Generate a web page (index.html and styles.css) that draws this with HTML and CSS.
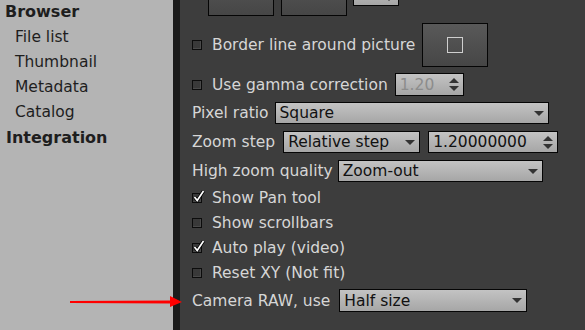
FILE: index.html
```html
<!DOCTYPE html>
<html>
<head>
<meta charset="utf-8">
<link rel="stylesheet" href="styles.css">
</head>
<body>
<div class="app">
  <nav class="sidebar">
    <div class="nav-head">Browser</div>
    <div class="nav-item">File list</div>
    <div class="nav-item">Thumbnail</div>
    <div class="nav-item">Metadata</div>
    <div class="nav-item">Catalog</div>
    <div class="nav-head">Integration</div>
  </nav>
  <main class="panel">
    <div class="row row-top">
      <div class="btn btn-swatch"><span class="swatch"></span></div>
      <div class="btn btn-swatch"><span class="swatch"></span></div>
      <div class="spin spin-top"><span class="spin-text"></span><span class="spin-arrows"><span class="up"></span><span class="down"></span></span></div>
    </div>
    <div class="row row-border">
      <span class="check"></span>
      <span class="label">Border line around picture</span>
      <div class="btn btn-color"><span class="outline-square"></span></div>
    </div>
    <div class="row row-gamma">
      <span class="check"></span>
      <span class="label">Use gamma correction</span>
      <div class="spin spin-gamma disabled"><span class="spin-text">1.20</span><span class="spin-arrows"><span class="up"></span><span class="down"></span></span></div>
    </div>
    <div class="row row-pixel">
      <span class="label">Pixel ratio</span>
      <div class="combo combo-pixel"><span class="combo-text">Square</span><span class="combo-arrow"></span></div>
    </div>
    <div class="row row-zoom">
      <span class="label">Zoom step</span>
      <div class="combo combo-zoom"><span class="combo-text">Relative step</span><span class="combo-arrow"></span></div>
      <div class="spin spin-zoom"><span class="spin-text">1.20000000</span><span class="spin-arrows"><span class="up"></span><span class="down"></span></span></div>
    </div>
    <div class="row row-quality">
      <span class="label">High zoom quality</span>
      <div class="combo combo-quality"><span class="combo-text">Zoom-out</span><span class="combo-arrow"></span></div>
    </div>
    <div class="row row-check first-check">
      <span class="check checked"><svg class="tick" viewBox="0 0 13 13" width="13" height="13"><path d="M2.5 7 L5.2 10.5 L11.5 1" fill="none" stroke="#000" stroke-width="3.2"/><path d="M2.5 7 L5.2 10.5 L11.5 1" fill="none" stroke="#fff" stroke-width="1.7"/></svg></span>
      <span class="label">Show Pan tool</span>
    </div>
    <div class="row row-check">
      <span class="check"></span>
      <span class="label">Show scrollbars</span>
    </div>
    <div class="row row-check">
      <span class="check checked"><svg class="tick" viewBox="0 0 13 13" width="13" height="13"><path d="M2.5 7 L5.2 10.5 L11.5 1" fill="none" stroke="#000" stroke-width="3.2"/><path d="M2.5 7 L5.2 10.5 L11.5 1" fill="none" stroke="#fff" stroke-width="1.7"/></svg></span>
      <span class="label">Auto play (video)</span>
    </div>
    <div class="row row-check">
      <span class="check"></span>
      <span class="label">Reset XY (Not fit)</span>
    </div>
    <div class="row row-raw">
      <span class="label">Camera RAW, use</span>
      <div class="combo combo-raw"><span class="combo-text">Half size</span><span class="combo-arrow"></span></div>
    </div>
  </main>
</div>
<svg class="red-arrow" width="120" height="14" viewBox="0 0 120 14">
  <path d="M0 6 L102 5.5 L102 8.5 L0 8 Z" fill="#ff0000"/>
  <path d="M100 1 L112 7 L100 12 Z" fill="#ff0000"/>
</svg>
</body>
</html>
```

FILE: styles.css
```css
html, body {
  margin: 0;
  padding: 0;
}
body {
  width: 585px;
  height: 330px;
  overflow: hidden;
  position: relative;
  font-family: "DejaVu Sans", "Liberation Sans", sans-serif;
  font-size: 15.5px;
}
.app {
  display: flex;
  height: 330px;
}
.sidebar {
  width: 173px;
  flex: none;
  background: #b4b4b4;
  color: #1e1e1e;
  display: flex;
  flex-direction: column;
}
.nav-head,
.nav-item {
  height: 25px;
  line-height: 25px;
}
.nav-head {
  font-weight: bold;
  font-size: 16px;
  padding-left: 5px;
  margin-top: -1px;
  margin-bottom: 1px;
}
.nav-item {
  padding-left: 15px;
}
.sidebar .nav-head:last-child {
  padding-left: 6px;
  margin-top: 0;
}
.panel {
  flex: 1;
  background: #3d3d3d;
  border-left: 7px solid #1b1b1b;
  padding-left: 12px;
  color: #d6d6d6;
  display: flex;
  flex-direction: column;
  overflow: hidden;
}
.row {
  display: flex;
  align-items: center;
  gap: 7px;
  flex: none;
}
.row-top {
  height: 44px;
  margin-top: -28px;
  padding-left: 16px;
  gap: 7px;
}
.row-border { height: 44px; margin-top: 7px; }
.row-gamma { height: 23px; margin-top: 6px; }
.row-pixel { height: 22px; margin-top: 6px; gap: 6px; }
.row-zoom { height: 22px; margin-top: 7px; gap: 8px; }
.row-quality { height: 22px; margin-top: 7px; gap: 5px; }
.row-check { height: 25px; }
.first-check { margin-top: 3px; }
.row-raw { height: 23px; margin-top: 4px; gap: 9px; }

.check {
  width: 8px;
  height: 8px;
  border: 1px solid #0c0c0c;
  background: #393939;
  box-shadow: inset -1px -1px 0 #4a4a4a;
  flex: none;
  margin-right: 3px;
  position: relative;
}
.tick {
  position: absolute;
  left: -1px;
  top: -4px;
}
.label {
  white-space: nowrap;
}

.btn {
  width: 64px;
  height: 42px;
  border: 1px solid #050505;
  background: linear-gradient(#595959, #464646);
  display: flex;
  align-items: center;
  justify-content: center;
  flex: none;
}
.swatch {
  width: 16px;
  height: 16px;
  background: #ffffff;
  margin-top: -4px;
}
.outline-square {
  width: 14px;
  height: 14px;
  border: 1px solid #cfcfcf;
}

.combo,
.spin {
  height: 20px;
  border: 1px solid #050505;
  background: linear-gradient(#c3c3c3, #a6a6a6);
  color: #111;
  display: flex;
  align-items: center;
  justify-content: space-between;
  padding: 0 4px 0 4px;
  box-sizing: content-box;
  flex: none;
}
.combo-text,
.spin-text {
  white-space: nowrap;
  line-height: 20px;
}
.combo-arrow {
  width: 0;
  height: 0;
  border-left: 5px solid transparent;
  border-right: 5px solid transparent;
  border-top: 5px solid #333;
}
.spin-arrows {
  display: flex;
  flex-direction: column;
  gap: 3px;
  align-items: center;
}
.spin-arrows .up {
  width: 0;
  height: 0;
  border-left: 5px solid transparent;
  border-right: 5px solid transparent;
  border-bottom: 5px solid #333;
}
.spin-arrows .down {
  width: 0;
  height: 0;
  border-left: 5px solid transparent;
  border-right: 5px solid transparent;
  border-top: 5px solid #333;
}
.disabled .spin-text { color: #8c8c8c; }

.combo-pixel { width: 264px; }
.combo-zoom { width: 127px; }
.spin-zoom { width: 120px; }
.combo-quality { width: 195px; }
.combo-raw { width: 178px; height: 21px; }
.spin-gamma { width: 59px; height: 21px; }
.spin-top { width: 36px; height: 21px; margin-left: -1px; }

.red-arrow {
  position: absolute;
  left: 70px;
  top: 295px;
}
```
